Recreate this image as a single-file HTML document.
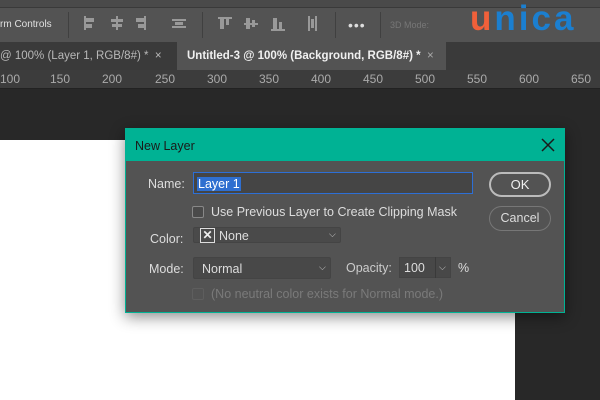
<!DOCTYPE html>
<html><head><style>
*{margin:0;padding:0;box-sizing:border-box}
body{width:600px;height:400px;overflow:hidden;background:#282828;font-family:"Liberation Sans",sans-serif;position:relative}
.a{position:absolute}
.t{color:#ddd;font-size:12.5px;white-space:nowrap}
</style></head><body>
<div class="a" style="left:0;top:0;width:600px;height:8px;background:#4a4a4a;border-bottom:1px solid #3a3a3a"></div>
<div class="a" style="left:0;top:8px;width:600px;height:34px;background:#535353"></div>
<div class="a t" style="left:0;top:19px;font-size:10px;color:#e0e0e0">rm Controls</div>
<div class="a" style="left:68px;top:12px;width:1px;height:26px;background:#404040"></div>
<div class="a" style="left:202px;top:12px;width:1px;height:26px;background:#404040"></div>
<div class="a" style="left:335px;top:12px;width:1px;height:26px;background:#404040"></div>
<div class="a" style="left:380px;top:12px;width:1px;height:26px;background:#404040"></div>
<svg class="a" style="left:80px;top:14px" width="260" height="22" fill="#999">
<rect x="4" y="2" width="2" height="14"/><rect x="6" y="4" width="8" height="4"/><rect x="6" y="10" width="6" height="4"/>
<rect x="36" y="2" width="2" height="14"/><rect x="31" y="5" width="12" height="3"/><rect x="32" y="10" width="10" height="3"/>
<rect x="64" y="2" width="2" height="14"/><rect x="56" y="4" width="8" height="4"/><rect x="58" y="10" width="6" height="4"/>
<rect x="92" y="5" width="14" height="2"/><rect x="95" y="8" width="8" height="3"/><rect x="92" y="12" width="14" height="2"/>
<rect x="138" y="3" width="14" height="2"/><rect x="140" y="5" width="4" height="10"/><rect x="146" y="5" width="3" height="6"/>
<rect x="164" y="9" width="14" height="2"/><rect x="166" y="4" width="4" height="11"/><rect x="172" y="6" width="3" height="7"/>
<rect x="191" y="15" width="14" height="2"/><rect x="193" y="4" width="4" height="11"/><rect x="199" y="8" width="3" height="7"/>
<rect x="228" y="2" width="2" height="15"/><rect x="235" y="2" width="2" height="15"/><rect x="231" y="5" width="3" height="9"/>
</svg>
<div class="a t" style="left:348px;top:17px;font-size:14px;color:#ddd;letter-spacing:1px">•••</div>
<div class="a t" style="left:390px;top:20px;font-size:9px;color:#777">3D Mode:</div>
<div class="a" style="left:470px;top:-1px;font-size:35px;font-weight:bold;letter-spacing:3px;font-family:'Liberation Sans',sans-serif"><span style="color:#f0603a">u</span><span style="color:#1b7fd0">nica</span></div>
<div class="a" style="left:0;top:42px;width:600px;height:28px;background:#3a3a3a"></div>
<div class="a t" style="left:0;top:50px;color:#b8b8b8;font-size:11.5px">@ 100% (Layer 1, RGB/8#) * &nbsp;×</div>
<div class="a" style="left:177px;top:42px;width:269px;height:28px;background:#535353"></div>
<div class="a t" style="left:187px;top:50px;color:#f0f0f0;font-size:11.5px;font-weight:bold">Untitled-3 @ 100% (Background, RGB/8#) * <span style="font-weight:normal;color:#aaa">&nbsp;×</span></div>
<div class="a" style="left:0;top:70px;width:600px;height:19px;background:#3c3c3c;border-bottom:1px solid #222"></div>
<div class="a t" style="left:0;top:72px;font-size:12px;color:#aaa">
<span class="a" style="left:0">100</span><span class="a" style="left:50px">150</span><span class="a" style="left:102px">200</span><span class="a" style="left:155px">250</span><span class="a" style="left:207px">300</span><span class="a" style="left:259px">350</span><span class="a" style="left:311px">400</span><span class="a" style="left:363px">450</span><span class="a" style="left:415px">500</span><span class="a" style="left:467px">550</span><span class="a" style="left:519px">600</span><span class="a" style="left:571px">650</span></div>
<div class="a" style="left:0;top:140px;width:515px;height:260px;background:#fff"></div>
<div class="a" style="left:125px;top:128px;width:440px;height:185px;background:#535353;border:1px solid #00b294;box-shadow:0 4px 14px rgba(0,0,0,.45)">
<div class="a" style="left:0;top:0;width:438px;height:32px;background:#00b294"></div>
<div class="a t" style="left:9px;top:10px;color:#1a1a1a;font-size:12.5px">New Layer</div>
<svg class="a" style="left:415px;top:9px" width="14" height="14" stroke="#1a1a1a" stroke-width="1.5"><path d="M1 1L13 13M13 1L1 13"/></svg>
<div class="a t" style="left:22px;top:48px">Name:</div>
<div class="a" style="left:67px;top:43px;width:280px;height:22px;background:#454545;border:1px solid #2d6fd6"></div>
<div class="a t" style="left:71px;top:48px;background:#2f6fd0;color:#fff;padding:0 1px">Layer 1</div>
<div class="a" style="left:363px;top:43px;width:62px;height:25px;border:2px solid #bbb;border-radius:13px;text-align:center;color:#eee;font-size:13px;line-height:21px">OK</div>
<div class="a" style="left:363px;top:77px;width:62px;height:25px;border:1.5px solid #777;border-radius:13px;text-align:center;color:#ddd;font-size:12.5px;line-height:22px">Cancel</div>
<div class="a" style="left:66px;top:77px;width:12px;height:12px;border:1px solid #888;border-radius:2px;background:#4a4a4a"></div>
<div class="a t" style="left:85px;top:76px">Use Previous Layer to Create Clipping Mask</div>
<div class="a t" style="left:24px;top:103px">Color:</div>
<div class="a" style="left:67px;top:98px;width:148px;height:16px;background:#4a4a4a;border:1px solid #444;border-radius:2px"></div>
<div class="a" style="left:74px;top:99px;width:15px;height:15px;border:1px solid #ddd;color:#eee;font-size:12px;line-height:13px;text-align:center;font-weight:bold">✕</div>
<div class="a t" style="left:93px;top:100px">None</div>
<div class="a t" style="left:203px;top:100px;font-size:9px;color:#ccc">⌵</div>
<div class="a t" style="left:23px;top:133px">Mode:</div>
<div class="a" style="left:67px;top:128px;width:138px;height:22px;background:#484848;border:1px solid #444;border-radius:2px"></div>
<div class="a t" style="left:76px;top:133px">Normal</div>
<div class="a t" style="left:193px;top:133px;font-size:9px;color:#ccc">⌵</div>
<div class="a t" style="left:220px;top:132px;color:#ccc">Opacity:</div>
<div class="a" style="left:273px;top:128px;width:52px;height:21px;background:#484848;border:1px solid #444"></div>
<div class="a" style="left:309px;top:128px;width:1px;height:21px;background:#3a3a3a"></div>
<div class="a t" style="left:278px;top:132px">100</div>
<div class="a t" style="left:313px;top:133px;font-size:9px;color:#ccc">⌵</div>
<div class="a t" style="left:332px;top:132px">%</div>
<div class="a" style="left:66px;top:159px;width:12px;height:12px;border:1px solid #5e5e5e;border-radius:2px"></div>
<div class="a t" style="left:85px;top:158px;color:#7a7a7a">(No neutral color exists for Normal mode.)</div>
</div>
</body></html>
